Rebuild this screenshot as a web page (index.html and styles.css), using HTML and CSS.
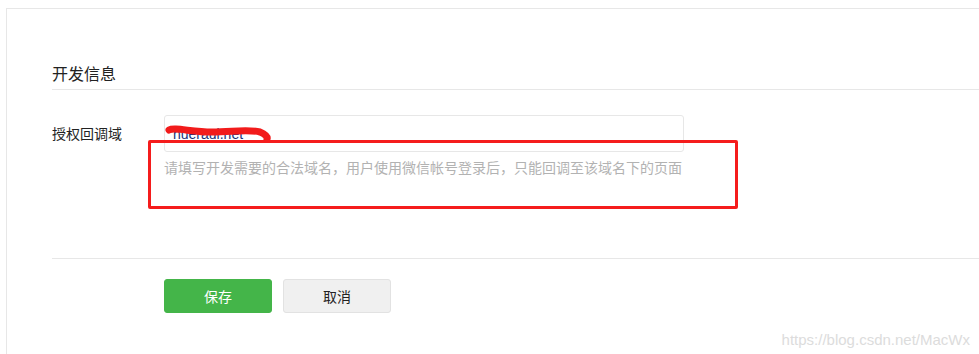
FILE: index.html
```html
<!DOCTYPE html>
<html lang="zh-CN">
<head>
    <meta charset="UTF-8">
    <meta name="viewport" content="width=device-width, initial-scale=1.0">
    <title>开发信息</title>
    <link rel="stylesheet" href="styles.css">
</head>
<body>
    <div class="panel">
        <h2 class="panel-title">开发信息</h2>

        <div class="form">
            <div class="form-row">
                <label class="form-label">授权回调域</label>
                <div class="form-field">
                    <div class="input-wrap">
                        <input type="text" class="text-input" value="hueraui.net">
                        <svg class="scribble" width="110" height="30" viewBox="0 0 110 30">
                            <path d="M5 12 C10 9, 28 14, 48 14 S 84 11, 96 14 C101 16, 104 19, 103 21" fill="none" stroke="#f21b1b" stroke-width="7" stroke-linecap="round"/>
                        </svg>
                    </div>
                    <p class="form-tip">请填写开发需要的合法域名，用户使用微信帐号登录后，只能回调至该域名下的页面</p>
                    <div class="mark-box"></div>
                </div>
            </div>
        </div>

        <div class="form-footer">
            <button class="btn btn-primary">保存</button>
            <button class="btn btn-default">取消</button>
        </div>
    </div>

    <div class="watermark">https://blog.csdn.net/MacWx</div>
</body>
</html>
```

FILE: styles.css
```css
html, body {
    margin: 0;
    height: 100%;
    overflow: hidden;
    background: #fff;
}
body {
    font-family: "Noto Sans CJK SC", "Liberation Sans", sans-serif;
    font-size: 14px;
    color: #353535;
    position: relative;
}
.panel {
    box-sizing: border-box;
    margin: 8px -40px 0 6px;
    height: 346px;
    border: 1px solid #e7e7e7;
    border-bottom: none;
    padding: 52px 0 0 45px;
}
.panel-title {
    margin: 0;
    font-size: 16px;
    font-weight: normal;
    line-height: 24px;
    padding-bottom: 4px;
    border-bottom: 1px solid #e7e7e7;
    color: #222;
}
.form {
    padding: 25px 0 0;
    height: 143px;
}
.form-row {
    display: flex;
}
.form-label {
    width: 112px;
    line-height: 36px;
    color: #222;
}
.form-field {
    position: relative;
}
.input-wrap {
    position: relative;
    width: 520px;
}
.text-input {
    box-sizing: border-box;
    width: 520px;
    height: 37px;
    padding: 0 8px;
    border: 1px solid #e7e7e7;
    border-radius: 3px;
    font-family: "Liberation Sans", sans-serif;
    font-size: 14px;
    color: #173177;
    outline: none;
}
.scribble {
    position: absolute;
    left: 0;
    top: 3px;
}
.form-tip {
    margin: 5px 0 0;
    line-height: 20px;
    color: #b2b2b2;
    font-size: 14px;
}
.mark-box {
    position: absolute;
    left: -16px;
    top: 25px;
    width: 584px;
    height: 63px;
    border: 3.5px solid #f51c1c;
    border-radius: 2px;
}
.form-footer {
    border-top: 1px solid #e7e7e7;
    padding: 20px 0 0 112px;
    display: flex;
    gap: 11px;
}
.btn {
    width: 108px;
    height: 34px;
    border-radius: 3px;
    font-family: "Noto Sans CJK SC", sans-serif;
    font-size: 14px;
    cursor: pointer;
}
.btn-primary {
    background: #44b549;
    border: 1px solid #44b549;
    color: #fff;
}
.btn-default {
    background: #f0f0f0;
    border: 1px solid #e2e2e2;
    color: #222;
}
.watermark {
    position: absolute;
    right: 9px;
    bottom: 6px;
    font-family: "Liberation Sans", sans-serif;
    font-size: 15px;
    color: #dcdcdc;
}
```
